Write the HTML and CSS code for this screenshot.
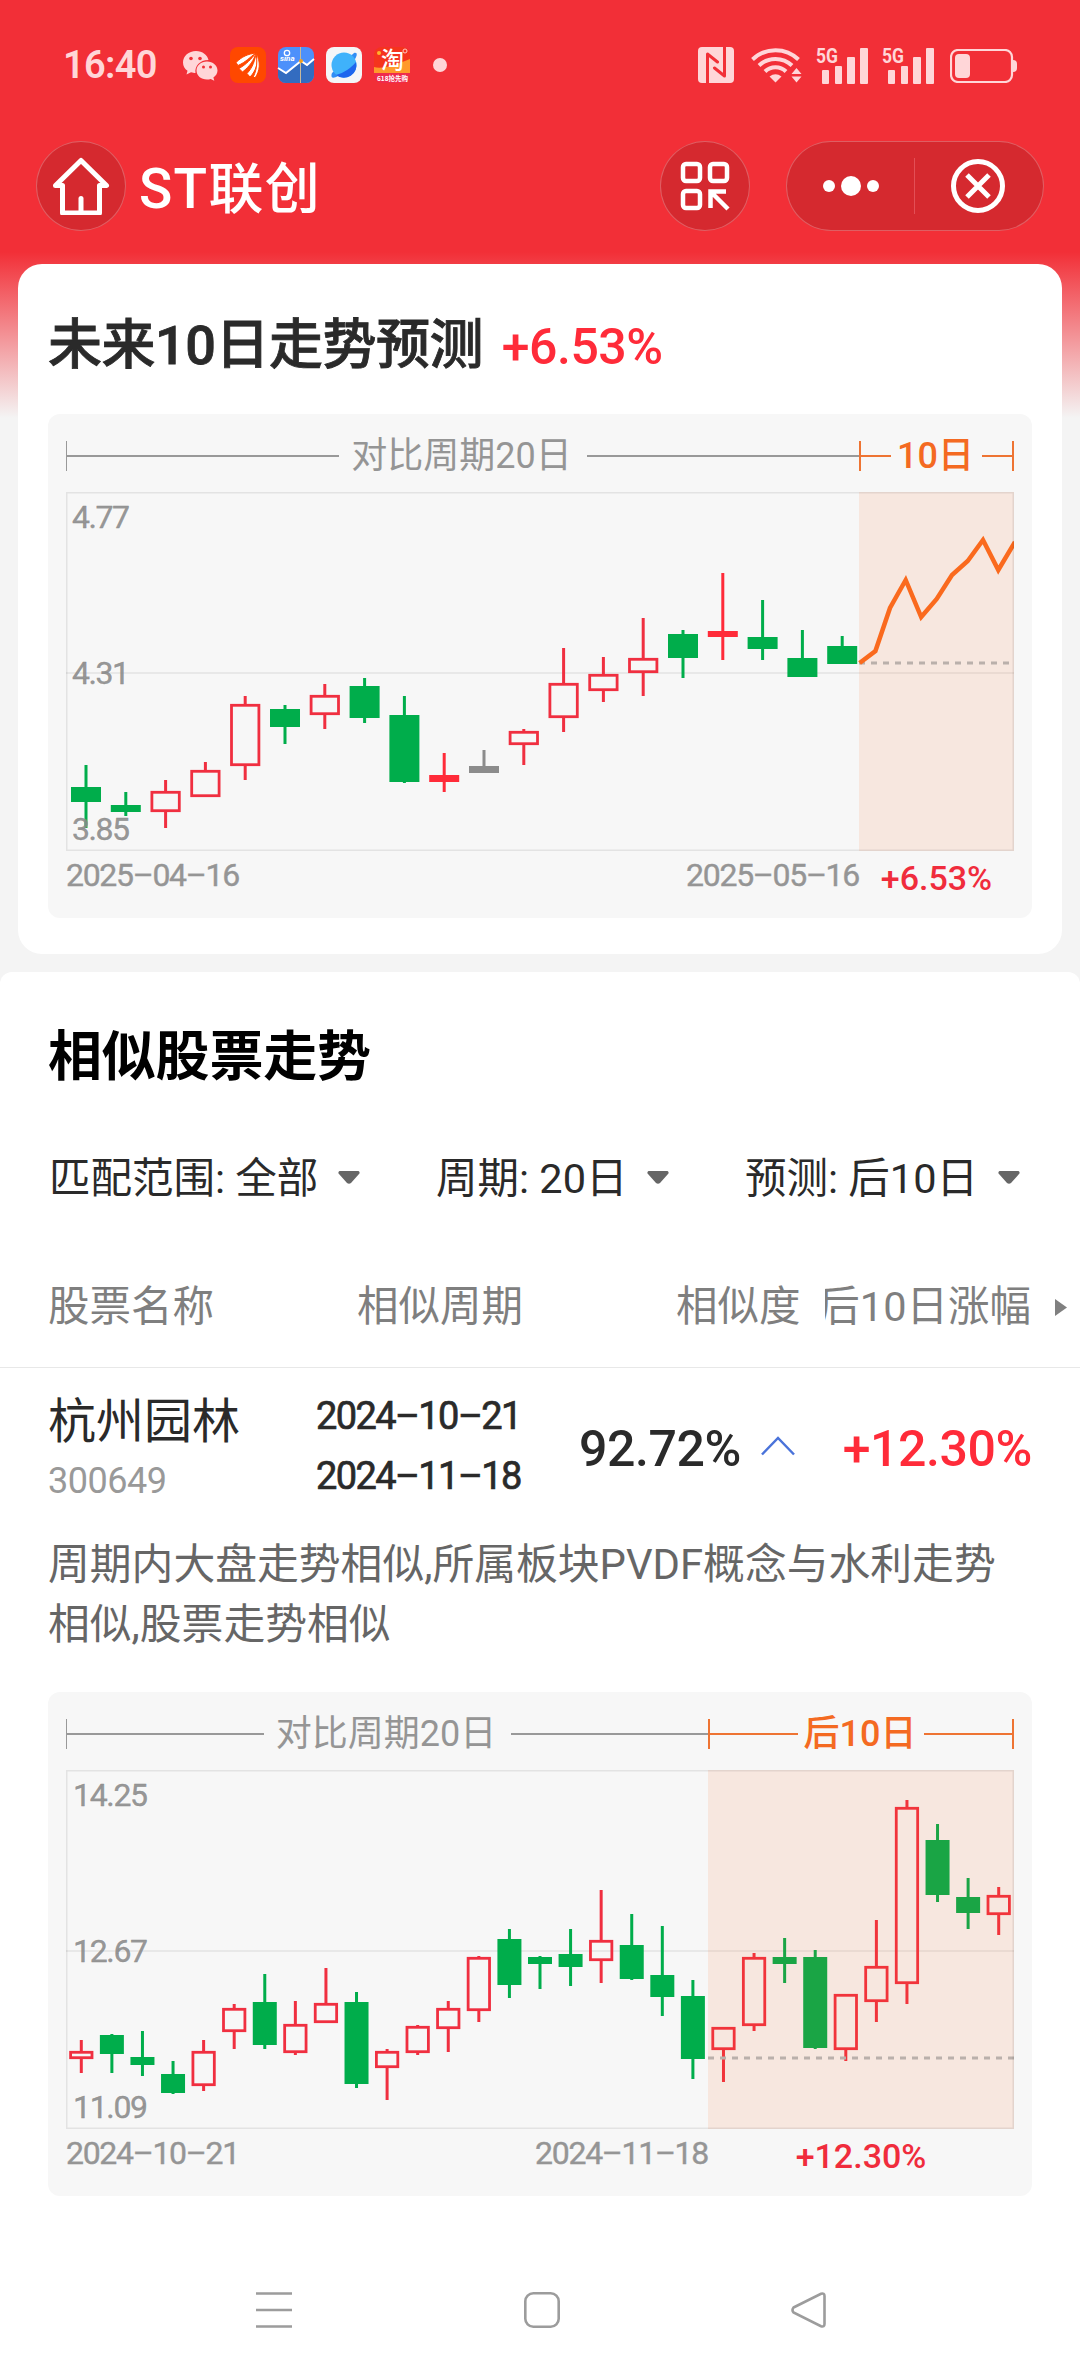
FILE: index.html
```html
<!DOCTYPE html>
<html lang="zh-CN">
<head>
  <meta charset="UTF-8" />
  <meta name="viewport" content="width=device-width, initial-scale=1.0"/>
  <title>ST联创</title>
  <link rel="stylesheet" href="styles.css">
</head>
<body>

  <!-- Status Bar -->
  <div class="status-bar">
    <span class="time">16:40</span>
    <div class="app-icons">
      <svg class="wechat" width="35" height="30" viewBox="0 0 35 30">
        <path fill="#ffd6d8" d="M13 0C5.800 0 0 5 0 11.500c0 3.500 1.700 6.300 4.500 8.300L3.500 23.500l4.500-2.200c1.700.5 2.800.7 4.500.7-1-6.500 4-13 13-13C24.500 4 19.500 0 13 0z"/>
        <path fill="#ffd6d8" d="M24 10.500c-6 0-10.500 4-10.500 9s4.500 9 10.500 9c1.300 0 2.500-.2 3.700-.6l3.600 1.900-.9-3.300c2.500-1.700 4.100-4.200 4.100-7 0-5-4.500-9-10.500-9z"/>
        <g fill="#f22f37"><circle cx="8" cy="7.500" r="1.800"/><circle cx="17" cy="7.500" r="1.800"/><circle cx="20.500" cy="16" r="1.500"/><circle cx="27.500" cy="16" r="1.500"/></g>
      </svg>
      <svg width="36" height="36" viewBox="0 0 36 36">
        <rect width="36" height="36" rx="8" fill="#ff4800"/>
        <g fill="#fff" stroke="#ff4800" stroke-width="1"><path d="M6 15.500C12 9.500 18 7 26 6c-6 4-10 9-18 12.500z"/><path d="M9 21.500C17 17 21 12 26 6c-2 7-6 13-13.500 19z"/><path d="M17 26.500C23 20 25 13 26 6c3 9 0 18-6 24z"/><path d="M23.500 29.500C27 22 27.500 14 26 6c5 9 4 18-1 25z"/></g>
      </svg>
      <svg width="36" height="36" viewBox="0 0 36 36">
        <rect width="36" height="36" rx="8" fill="#4d90fb"/>
        <path d="M0 21l8 6 15-13 6 5 7-6v15a8 8 0 0 1-8 8H8a8 8 0 0 1-8-8z" fill="#336cc0"/>
        <path d="M0 21l8 5 15-12 6 4 7-6" fill="none" stroke="#fff" stroke-width="2"/>
        <path d="M22.500 0v36" stroke="#c9b99a" stroke-width="1"/>
        <circle cx="23" cy="14" r="2" fill="#f2a01f"/>
        <circle cx="9" cy="6" r="2.700" fill="none" stroke="#fff" stroke-width="1.300"/>
        <text class="sina" x="2" y="14">sina</text>
      </svg>
      <svg width="36" height="36" viewBox="0 0 36 36">
        <rect width="36" height="36" rx="8" fill="#f4f6f8"/>
        <path d="M28 6c4-1 3 3 1 6L12 29c-5 3-8 2-6-3z" fill="#2f8df5"/>
        <circle cx="18" cy="18" r="12.500" fill="#3fb2fb"/>
        <path d="M30 15a12.500 12.500 0 0 1-20 13c8-2 15-7 20-13z" fill="#1d66ee"/>
      </svg>
      <svg width="36" height="36" viewBox="0 0 36 36">
        <rect width="36" height="36" rx="8" fill="#f5341d"/>
        <path d="M0 20c8 3 24-3 36-8v14H0z" fill="#ff9a2b"/>
        <path d="M0 26h36v2a8 8 0 0 1-8 8H8a8 8 0 0 1-8-8z" fill="#ef2a4c"/>
        <circle cx="5" cy="6" r="2" fill="#ffb22d"/><circle cx="31" cy="4" r="2" fill="none" stroke="#ffc9c0"/>
        <text class="tao" x="7" y="21">淘</text>
        <text class="tao-sale" x="3" y="33.500">618抢先购</text>
      </svg>
    </div>
    <span class="more-dot"></span>
    <div class="system-icons">
      <svg width="36" height="36" viewBox="0 0 36 36">
        <rect width="36" height="36" rx="4" fill="#ffd6d8"/>
        <path d="M9.500 36V7l10 8M26.500 0v29l-10-8" fill="none" stroke="#f22f37" stroke-width="3" stroke-linecap="round" stroke-linejoin="round"/>
      </svg>
      <svg class="wifi" width="51" height="36" viewBox="0 0 51 36">
        <g fill="none" stroke="#ffd6d8" stroke-width="4"><path d="M1.500 12.500a33 33 0 0 1 46 0"/><path d="M8 18.500a24 24 0 0 1 33 0"/><path d="M14 24.500a15 15 0 0 1 21 0"/></g>
        <path d="M18.500 29.500q6-4.500 12 0l-6 6z" fill="#ffd6d8"/>
        <path d="M45.500 21l5 6h-10zM45.500 35.500l5-6h-10z" fill="#ffd6d8"/>
      </svg>
      <svg class="signal" width="52" height="45" viewBox="0 -8 52 45">
        <text x="0" y="15.500" textLength="22" lengthAdjust="spacingAndGlyphs">5G</text>
        <g fill="#ffd6d8"><rect x="6" y="23" width="7" height="14" rx="1"/><rect x="19" y="19" width="7" height="18" rx="1"/><rect x="31" y="10" width="8" height="27" rx="1"/><rect x="44" y="1" width="8" height="36" rx="1"/></g>
      </svg>
      <svg class="signal" width="52" height="45" viewBox="0 -8 52 45">
        <text x="0" y="15.500" textLength="22" lengthAdjust="spacingAndGlyphs">5G</text>
        <g fill="#ffd6d8"><rect x="6" y="23" width="7" height="14" rx="1"/><rect x="19" y="19" width="7" height="18" rx="1"/><rect x="31" y="10" width="8" height="27" rx="1"/><rect x="44" y="1" width="8" height="36" rx="1"/></g>
      </svg>
      <svg class="battery" width="68" height="34" viewBox="0 0 68 34">
        <rect x="1" y="1" width="61" height="32" rx="7" fill="none" stroke="#ffd6d8" stroke-width="2.200"/>
        <rect x="5" y="5" width="15" height="24" rx="4" fill="#ffd6d8"/>
        <path d="M63 11q4 0 4 4v4q0 4-4 4z" fill="#ffd6d8"/>
      </svg>
    </div>
  </div>

  <!-- Title Bar -->
  <header>
    <a class="round-btn" href="#">
      <svg width="58" height="58" viewBox="0 0 58 58" fill="none" stroke="#fff" stroke-width="5" stroke-linecap="round" stroke-linejoin="round">
        <path d="M10.500 28.500H3.500L29 3.500l25.500 25h-7V56h-37z"/><path d="M29 41.500V55"/>
      </svg>
    </a>
    <h1>ST联创</h1>
    <a class="round-btn scan" href="#">
      <svg width="50" height="50" viewBox="0 0 50 50" fill="none" stroke="#fff" stroke-width="4.500">
        <rect x="3" y="3" width="17" height="17" rx="3"/><rect x="30" y="3" width="17" height="17" rx="3"/><rect x="3" y="30" width="17" height="17" rx="3"/>
        <path d="M30.500 47V30.500H46M31 31l17 17"/>
      </svg>
    </a>
    <div class="capsule">
      <a class="dots" href="#"><i></i><i></i><i></i></a>
      <a class="close" href="#">
        <svg width="54" height="54" viewBox="0 0 54 54" fill="none" stroke="#fff" stroke-width="5">
          <circle cx="27" cy="27" r="24.500"/><path d="M16 16l22 22M38 16L16 38"/>
        </svg>
      </a>
    </div>
  </header>

  <!-- Forecast -->
  <section class="forecast">
    <h2>未来10日走势预测 <span class="up">+6.53%</span></h2>
    <div class="chart-box forecast-chart">
      <div class="period-row">
        <div class="period past"><span>对比周期20日</span></div>
        <div class="period next"><span>10日</span></div>
      </div>
      <svg class="plot" width="948" height="359" viewBox="0 0 948 359">
        <path class="grid" d="M0 181H948"/>
        <g id="candles1"></g>
        <rect class="shade" x="793" y="0" width="155" height="359"/>
        <path class="base" d="M793 171H948"/>
        <path class="trend" d="M793.600 171l15.800-12L824 116l15.700-28 15.500 37 15.500-18L886 83l15.700-14L917 48l15.300 30L949 50"/>
        <rect class="frame" x=".75" y=".75" width="946.500" height="357.500"/>
        <text x="6" y="36" textLength="58">4.77</text>
        <text x="6" y="192" textLength="58">4.31</text>
        <text x="6" y="348" textLength="58">3.85</text>
      </svg>
      <div class="date-row">
        <div class="dates"><span>2025–04–16</span><span>2025–05–16</span></div>
        <span class="gain">+6.53%</span>
      </div>
    </div>
  </section>

  <!-- Similar Stocks -->
  <section class="similar">
    <h2>相似股票走势</h2>

    <div class="filters">
      <div class="filter">匹配范围: 全部<svg width="22" height="13" viewBox="0 0 22 13"><path d="M1.500 0h19q2 1.500.5 3l-8 9q-2 1.500-4 0L1 3Q-.5 1.500 1.500 0z"/></svg></div>
      <div class="filter">周期: 20日<svg width="22" height="13" viewBox="0 0 22 13"><path d="M1.500 0h19q2 1.500.5 3l-8 9q-2 1.500-4 0L1 3Q-.5 1.500 1.500 0z"/></svg></div>
      <div class="filter">预测: 后10日<svg width="22" height="13" viewBox="0 0 22 13"><path d="M1.500 0h19q2 1.500.5 3l-8 9q-2 1.500-4 0L1 3Q-.5 1.500 1.500 0z"/></svg></div>
    </div>

    <div class="table-head">
      <span>股票名称</span>
      <span>相似周期</span>
      <span>相似度</span>
      <span class="clip"><b>后10日涨幅</b></span>
      <svg width="12" height="17" viewBox="0 0 12 17"><path d="M0 0l12 8.500L0 17z"/></svg>
    </div>

    <div class="stock">
      <div class="name"><strong>杭州园林</strong><small>300649</small></div>
      <div class="range"><span>2024–10–21</span><span>2024–11–18</span></div>
      <div class="score">92.72%</div>
      <svg class="chevron" width="34" height="20" viewBox="0 0 34 20"><path d="M1 18.500L17 2l16 16.500"/></svg>
      <div class="rise">+12.30%</div>
    </div>

    <p class="desc">周期内大盘走势相似,所属板块PVDF概念与水利走势<br>相似,股票走势相似</p>

    <div class="chart-box similar-chart">
      <div class="period-row">
        <div class="period past"><span>对比周期20日</span></div>
        <div class="period next"><span>后10日</span></div>
      </div>
      <svg class="plot" width="948" height="359" viewBox="0 0 948 359">
        <path class="grid" d="M0 181H948"/>
        <g id="candles2"></g>
        <rect class="shade" x="642" y="0" width="306" height="359"/>
        <path class="base" d="M642 288H948"/>
        <rect class="frame" x=".75" y=".75" width="946.500" height="357.500"/>
        <text x="7" y="36" textLength="75">14.25</text>
        <text x="7" y="192" textLength="75">12.67</text>
        <text x="7" y="348" textLength="75">11.09</text>
      </svg>
      <div class="date-row">
        <div class="dates"><span>2024–10–21</span><span>2024–11–18</span></div>
        <span class="gain">+12.30%</span>
      </div>
    </div>
  </section>

  <!-- Navigation Keys -->
  <nav>
    <svg width="36" height="36" viewBox="0 0 36 36"><path d="M0 1.500h36M0 18h36M0 34.500h36"/></svg>
    <svg width="36" height="36" viewBox="0 0 36 36"><rect x="1.300" y="1.300" width="33.400" height="33.400" rx="8"/></svg>
    <svg width="36" height="36" viewBox="0 0 36 36"><path d="M2.500 15.500L30 1.800q3.500-1 3.500 2.200v28q0 3.200-3.500 2.200L2.500 20.500q-2-2.500 0-5z"/></svg>
  </nav>

  <script src="chart.js"></script>
</body>
</html>
```

FILE: styles.css
```css
* {
  box-sizing: border-box;
}

body {
  margin: 0;
  height: 2376px;
  display: flex;
  flex-direction: column;
  font-family: Roboto, 'Noto Sans CJK SC', sans-serif;
  color: #2a2a2a;
  background: #f4f4f4 linear-gradient(#f22f37 0, #f22f37 252px, #f4f4f4 418px) no-repeat;
}

svg {
  display: block;
  flex: none;
}

a {
  text-decoration: none;
}

/* status bar */
.status-bar {
  height: 130px;
  padding: 0 62px 0 63px;
  display: flex;
  align-items: center;
}

.time {
  width: 120px;
  font-size: 38px;
  font-weight: 600;
  letter-spacing: -0.7px;
  color: #ffd6d8;
}

.app-icons {
  display: flex;
  align-items: center;
  gap: 12px;
}

.app-icons svg {
  overflow: visible;
}

.wechat {
  margin-top: 2px;
}

.sina {
  font: italic bold 8px Roboto, sans-serif;
  fill: #fff;
}

.tao {
  font: 500 23px 'Noto Sans CJK SC', sans-serif;
  fill: #fff;
}

.tao-sale {
  font: bold 6.5px 'Noto Sans CJK SC', sans-serif;
  fill: #fff;
}

.more-dot {
  width: 14px;
  height: 14px;
  margin-left: 23px;
  border-radius: 50%;
  background: #ffd6d8;
}

.system-icons {
  display: flex;
  align-items: center;
  margin-left: auto;
}

.wifi {
  margin: 0 14px 0 17px;
}

.signal {
  margin: -8px 14px 0 0;
}

.signal text {
  font: bold 21px Roboto, sans-serif;
  fill: #ffd6d8;
}

.battery {
  margin: 2px 0 0 2px;
}

/* title bar */
header {
  height: 134px;
  padding: 11px 36px 0;
  display: flex;
  align-items: flex-start;
}

header h1 {
  margin: 0 auto 0 13px;
  font-size: 55px;
  font-weight: 500;
  line-height: 97px;
  letter-spacing: 1.3px;
  color: #fff;
}

.round-btn {
  width: 90px;
  height: 90px;
  border: 1.5px solid rgba(255, 255, 255, 0.25);
  border-radius: 50%;
  background: #d5292f;
  display: flex;
  align-items: center;
  justify-content: center;
}

.scan {
  margin-right: 36px;
}

.capsule {
  width: 258px;
  height: 90px;
  border: 1.5px solid rgba(255, 255, 255, 0.25);
  border-radius: 45px;
  background: #d5292f;
  display: flex;
  align-items: center;
}

.dots {
  width: 128px;
  height: 56px;
  padding-left: 36px;
  border-right: 1.5px solid #e34f56;
  display: flex;
  align-items: center;
  gap: 6px;
}

.dots i {
  width: 12px;
  height: 12px;
  border-radius: 50%;
  background: #fff;
}

.dots i:nth-child(2) {
  width: 20px;
  height: 20px;
}

.close {
  margin-left: 36px;
}

/* cards */
h2 {
  margin: 0;
  font-size: 54px;
  font-weight: 500;
}

.forecast {
  height: 690px;
  margin: 0 18px 18px;
  padding: 0 30px;
  border-radius: 24px;
  background: #fff;
}

.forecast h2 {
  height: 150px;
  line-height: 164px;
  letter-spacing: -0.5px;
  white-space: nowrap;
  -webkit-text-stroke: 0.8px #2a2a2a;
}

.up {
  margin-left: 6px;
  font-size: 50px;
  color: #ff2b39;
  -webkit-text-stroke: 0;
}

.similar {
  flex: none;
  height: 1404px;
  padding: 0 48px;
  border-radius: 12px 12px 0 0;
  background: #fff;
}

.similar h2 {
  height: 149px;
  line-height: 172px;
  font-weight: 700;
  letter-spacing: -0.2px;
  color: #000;
}

/* charts */
.chart-box {
  height: 504px;
  padding: 27px 18px 0;
  border-radius: 12px;
  background: #f7f7f7;
}

.period-row {
  height: 51px;
  display: flex;
}

.period {
  height: 30px;
  display: flex;
  align-items: center;
  border-left: 1.5px solid #999;
  font-size: 36px;
  line-height: 30px;
  color: #959595;
}

.period::before,
.period::after {
  content: "";
  flex: 1;
  height: 2px;
  background: #999;
}

.period span {
  padding: 0 15px 0 12px;
  white-space: nowrap;
}

.period.next {
  border-left: 2px solid #ee7433;
  border-right: 2px solid #ee7433;
  font-weight: 500;
  color: #f46a22;
}

.period.next::before,
.period.next::after {
  background: #ee7433;
}

.period.next span {
  padding: 0 8px 0 6px;
}

.forecast-chart .past,
.forecast-chart .dates {
  width: 793px;
}

.forecast-chart .next,
.forecast-chart .gain {
  width: 155px;
}

.similar-chart .past,
.similar-chart .dates {
  width: 642px;
}

.similar-chart .next,
.similar-chart .gain {
  width: 306px;
}

.plot text {
  font: 32px Roboto, sans-serif;
  fill: #8a8a8a;
  fill-opacity: 0.9;
  stroke: #8a8a8a;
  stroke-opacity: 0.9;
  stroke-width: 0.4;
}

.grid,
.frame {
  fill: none;
  stroke: rgba(0, 0, 0, 0.08);
  stroke-width: 1.5;
}

.shade {
  fill: rgba(255, 97, 20, 0.1);
}

.base {
  stroke: #bab0ab;
  stroke-width: 3;
  stroke-dasharray: 6 6;
}

.trend {
  fill: none;
  stroke: #fa6a1e;
  stroke-width: 4.5;
}

.green { fill: #00ad4b; stroke: #00ad4b; }
.red { fill: #ff2b39; stroke: #ff2b39; }
.grey { fill: #8c8c8c; stroke: #8c8c8c; }
.hollow { fill: none; stroke: #f02f40; }

.date-row {
  display: flex;
  line-height: 49px;
}

.dates {
  display: flex;
  justify-content: space-between;
  font-size: 32px;
  letter-spacing: -1.3px;
  color: #959595;
  -webkit-text-stroke: 0.4px #959595;
}

.gain {
  padding-top: 3px;
  font-size: 34px;
  font-weight: 500;
  text-align: center;
  color: #f02c3c;
}

/* filters */
.filters {
  height: 126px;
  display: flex;
  font-size: 41.5px;
  line-height: 116px;
  white-space: nowrap;
}

.filter {
  padding-left: 1px;
  display: flex;
  align-items: flex-start;
  justify-content: space-between;
}

.filter:first-child {
  width: 312px;
  margin-right: 75px;
}

.filter:nth-child(2) {
  width: 234px;
  margin-right: 75px;
}

.filter:nth-child(3) {
  width: 276px;
}

.filter svg {
  margin-top: 50px;
  fill: #666;
}

/* table */
.table-head {
  height: 121px;
  margin: 0 -48px;
  padding: 0 13px 0 48px;
  border-bottom: 1.5px solid #e8e8e8;
  display: grid;
  grid-template-columns: 309px 319px 149px 206px 1fr;
  align-items: center;
  font-size: 41.5px;
  line-height: 118px;
  white-space: nowrap;
  color: #7f7f7f;
}

.clip {
  display: flex;
  justify-content: flex-end;
  overflow: hidden;
}

.clip b {
  font-weight: 400;
}

.table-head svg {
  justify-self: end;
  fill: #808080;
}

.stock {
  height: 156px;
  display: flex;
  align-items: center;
  white-space: nowrap;
}

.name {
  width: 268px;
  padding-top: 9px;
  display: flex;
  flex-direction: column;
}

.name strong {
  font-size: 48px;
  font-weight: 400;
  line-height: 60px;
}

.name small {
  font-size: 36px;
  line-height: 58px;
  letter-spacing: -0.5px;
  color: #999;
}

.range {
  width: 263px;
  display: flex;
  flex-direction: column;
  font-size: 38px;
  line-height: 60px;
  letter-spacing: -1.6px;
  -webkit-text-stroke: 0.7px #2a2a2a;
}

.score,
.rise {
  padding-top: 5px;
  font-size: 50px;
  font-weight: 500;
  letter-spacing: -0.4px;
}

.chevron {
  margin-left: 20px;
  fill: none;
  stroke: #4a73da;
  stroke-width: 2.5;
}

.rise {
  margin-left: auto;
  color: #ff2b39;
}

.desc {
  height: 168px;
  margin: 0;
  padding-top: 11px;
  font-size: 41.8px;
  line-height: 60px;
  white-space: nowrap;
  color: #666;
}

/* navigation keys */
nav {
  position: absolute;
  top: 2292px;
  left: 256px;
  width: 571px;
  display: flex;
  justify-content: space-between;
}

nav svg {
  fill: none;
  stroke: #9c9c9c;
  stroke-width: 2.6;
}
```

FILE: chart.js
```javascript
// each candle: [color, high, top, bottom, low]
const forecast = [
  ['g', 273, 295, 310, 336], ['g', 300, 313, 320, 324], ['r', 288, 299, 320, 336],
  ['r', 270, 278, 305, 305], ['r', 204, 212, 274, 288], ['g', 213, 217, 235, 252],
  ['r', 192, 203, 223, 237], ['g', 186, 194, 226, 231], ['g', 204, 223, 290, 291],
  ['r', 261, 283, 290, 300], ['n', 258, 274, 281, 281], ['r', 237, 239, 253, 273],
  ['r', 156, 191, 226, 240], ['r', 165, 182, 199, 210], ['r', 126, 166, 181, 204],
  ['g', 138, 142, 166, 186], ['r', 81, 139, 145, 168], ['g', 108, 145, 157, 168],
  ['g', 138, 166, 185, 185], ['g', 144, 154, 172, 172]
];

const similar = [
  ['r', 270, 281, 289, 303], ['g', 264, 265, 284, 303], ['g', 261, 287, 295, 306],
  ['g', 291, 304, 323, 324], ['r', 270, 281, 316, 321], ['r', 234, 238, 262, 279],
  ['g', 204, 232, 275, 279], ['r', 231, 254, 283, 285], ['r', 198, 233, 253, 253],
  ['g', 222, 232, 314, 318], ['r', 279, 281, 298, 330], ['r', 255, 256, 283, 285],
  ['r', 231, 238, 259, 282], ['r', 186, 187, 241, 252], ['g', 159, 169, 215, 228],
  ['g', 186, 187, 194, 219], ['g', 159, 184, 197, 216], ['r', 120, 170, 191, 213],
  ['g', 144, 175, 209, 210], ['g', 156, 205, 227, 246], ['g', 210, 226, 289, 309],
  ['r', 257, 257, 280, 312], ['r', 183, 187, 256, 261], ['g', 168, 187, 194, 213],
  ['g', 180, 187, 278, 279], ['r', 224, 224, 280, 291], ['r', 150, 196, 232, 252],
  ['r', 30, 37, 214, 234], ['g', 54, 70, 125, 132], ['g', 108, 127, 143, 159],
  ['r', 117, 125, 145, 165]
];

const names = { g: 'green', r: 'red', n: 'grey' };

function drawCandles(id, data, start, step, width) {
  let out = '';
  data.forEach(([color, high, top, bottom, low], i) => {
    const x = start + step * i;
    const hollow = color === 'r' && bottom - top > 7;
    const cls = hollow ? 'hollow' : names[color];
    out += `<path class="${cls}" stroke-width="3" d="M${x} ${high}V${top + 1}M${x} ${bottom - 1}V${low}"/>`;
    if (hollow) {
      out += `<rect class="${cls}" stroke-width="2.8" x="${x - width / 2 + 1.3}" y="${top + 1.3}" width="${width - 2.6}" height="${bottom - top - 2.6}"/>`;
    } else {
      out += `<rect class="${cls}" stroke-width="0" x="${x - width / 2}" y="${top}" width="${width}" height="${bottom - top}"/>`;
    }
  });
  document.getElementById(id).innerHTML = out;
}

drawCandles('candles1', forecast, 20, 39.8, 30);
drawCandles('candles2', similar, 15.3, 30.58, 24);
```
